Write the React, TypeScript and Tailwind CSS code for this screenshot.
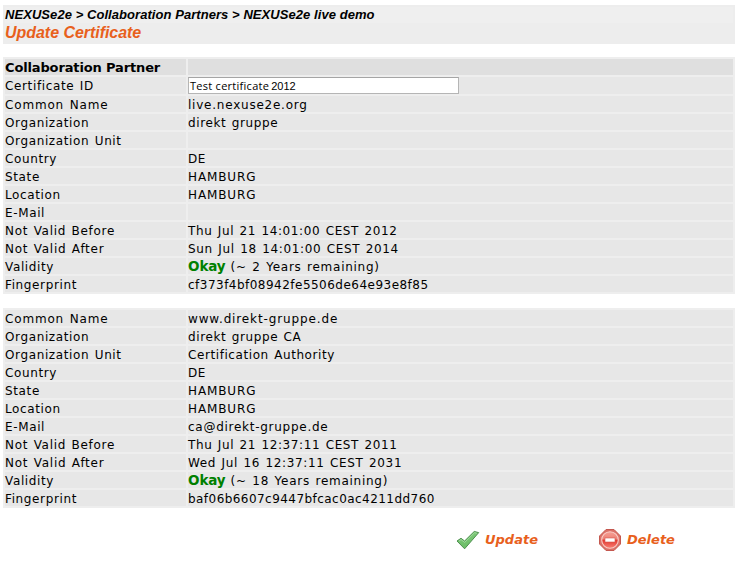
import type { ReactNode } from "react";

type RowData = { label: string; value?: ReactNode; track?: string };

function Okay({ rest }: { rest: string }) {
  return (
    <div className="leading-[18px]">
      <b className="text-[13.5px] leading-none tracking-[-0.1px] text-[#008000] [word-spacing:0px]">Okay</b>
      <span className="ml-[-0.5px]"> {rest}</span>
    </div>
  );
}

const partner: RowData[] = [
  { label: "Common Name", value: "live.nexuse2e.org", track: "tracking-[0.77px]" },
  { label: "Organization", value: "direkt gruppe" },
  { label: "Organization Unit" },
  { label: "Country", value: "DE" },
  { label: "State", value: "HAMBURG", track: "tracking-[0.87px]" },
  { label: "Location", value: "HAMBURG", track: "tracking-[0.87px]" },
  { label: "E-Mail" },
  { label: "Not Valid Before", value: "Thu Jul 21 14:01:00 CEST 2012" },
  { label: "Not Valid After", value: "Sun Jul 18 14:01:00 CEST 2014", track: "tracking-[0.65px]" },
  { label: "Validity", value: <Okay rest="(~ 2 Years remaining)" />, track: "tracking-[0.73px]" },
  { label: "Fingerprint", value: "cf373f4bf08942fe5506de64e93e8f85", track: "tracking-[0.48px]" },
];

const issuer: RowData[] = [
  { label: "Common Name", value: "www.direkt-gruppe.de", track: "tracking-[0.87px]" },
  { label: "Organization", value: "direkt gruppe CA" },
  { label: "Organization Unit", value: "Certification Authority", track: "tracking-[0.58px]" },
  { label: "Country", value: "DE" },
  { label: "State", value: "HAMBURG", track: "tracking-[0.87px]" },
  { label: "Location", value: "HAMBURG", track: "tracking-[0.87px]" },
  { label: "E-Mail", value: "ca@direkt-gruppe.de", track: "tracking-[0.73px]" },
  { label: "Not Valid Before", value: "Thu Jul 21 12:37:11 CEST 2011" },
  { label: "Not Valid After", value: "Wed Jul 16 12:37:11 CEST 2031", track: "tracking-[0.65px]" },
  { label: "Validity", value: <Okay rest="(~ 18 Years remaining)" />, track: "tracking-[0.73px]" },
  { label: "Fingerprint", value: "baf06b6607c9447bfcac0ac4211dd760", track: "tracking-[0.45px]" },
];

const labelTracks: Record<string, string> = {
  "Common Name": "tracking-[0.83px]",
  "Not Valid Before": "tracking-[0.7px]",
  "Not Valid After": "tracking-[0.73px]",
};

function Row({ label, value, track = "tracking-[0.61px]" }: RowData) {
  const labelTrack = labelTracks[label] ?? "tracking-[0.63px]";
  return (
    <div className="grid h-4 grid-cols-[181px_1fr] gap-0.5 leading-[18px]">
      <div className={`h-4 bg-[#e7e7e7] ${labelTrack}`}>{label}</div>
      <div className={`h-4 bg-[#e7e7e7] ${track}`}>{value}</div>
    </div>
  );
}

function CheckIcon() {
  return (
    <svg width="24" height="20" viewBox="0 0 24 20">
      <defs>
        <linearGradient id="check" x1="0" y1="0" x2="0" y2="1">
          <stop offset="0" stopColor="#7cc878" />
          <stop offset="1" stopColor="#6cbd67" />
        </linearGradient>
      </defs>
      <path
        d="M1 11 L5 8.3 L8.6 11 L18.2 1.5 L22.7 2.6 L8.6 18.8 Z"
        fill="url(#check)"
        stroke="#4c8f4d"
        strokeWidth="1"
        strokeLinejoin="round"
      />
      <path d="M3 11.1 L5 9.6 L8.7 12.4 L18.5 2.7 L20.7 3.2" fill="none" stroke="#a5dba0" strokeWidth="0.9" />
    </svg>
  );
}

function DeleteIcon() {
  return (
    <svg width="22" height="22" viewBox="0 0 22 22">
      <defs>
        <linearGradient id="stop" x1="0" y1="0" x2="0" y2="1">
          <stop offset="0" stopColor="#f5a095" />
          <stop offset="0.45" stopColor="#ee8075" />
          <stop offset="0.5" stopColor="#e2382f" />
          <stop offset="1" stopColor="#f98075" />
        </linearGradient>
      </defs>
      <path
        d="M7 .5 H15 L21.5 7 V15 L15 21.5 H7 L.5 15 V7 Z"
        fill="#dc7067"
        stroke="#c4584f"
        strokeWidth="1"
      />
      <circle cx="11" cy="11" r="8.3" fill="url(#stop)" stroke="#f9cdc7" strokeWidth="1.1" />
      <rect x="6" y="9" width="10" height="4" fill="#fff" stroke="#d4574e" strokeWidth="0.6" />
    </svg>
  );
}

export default function App() {
  return (
    <div className="h-[564px] w-[739px] bg-white pt-[5px] pl-[3px] font-['DejaVu_Sans',sans-serif] text-[12px] tracking-[0.63px] whitespace-pre text-black [word-spacing:1px]">
      <header className="h-[39px] w-[732px] bg-[#ededed] px-0.5 pt-0.5 font-['Liberation_Sans',Arial,sans-serif] font-bold italic [word-spacing:0px]">
        <div className="h-4 bg-[#efefef] text-[13px] leading-4 tracking-[0.06px]">
          NEXUSe2e &gt; Collaboration Partners &gt; NEXUSe2e live demo
        </div>
        <h1 className="text-[16px] leading-[19px] tracking-[-0.04px] text-[#e8601c]">Update Certificate</h1>
      </header>

      <section className="mt-[13px] flex w-[732px] flex-col gap-0.5 bg-[#eeeeee] p-0.5">
        <div className="grid h-4 grid-cols-[181px_1fr] gap-0.5 text-[13px] leading-[18px] font-bold tracking-[-0.14px] [word-spacing:0px]">
          <div className="h-4 bg-[#dfdfdf]">Collaboration Partner</div>
          <div className="h-4 bg-[#dfdfdf]" />
        </div>
        <div className="grid h-[17px] grid-cols-[181px_1fr] gap-0.5 leading-[19px]">
          <div className="h-[17px] bg-[#e7e7e7]">Certificate ID</div>
          <div className="h-[17px] bg-[#e7e7e7]">
            <div className="flex h-[17px] w-[271px] items-center border border-[#b5b5b5] border-t-[#a5a5a5] bg-white pl-px font-['Open_Sans',sans-serif] text-[11px] leading-[14px] tracking-[0.27px] [word-spacing:0px]">
              <span>Test certificate</span>
              <span className="ml-[2px] pt-px font-['Liberation_Sans',sans-serif] tracking-[0px]">2012</span>
            </div>
          </div>
        </div>
        {partner.map((r) => (
          <Row key={r.label} {...r} />
        ))}
      </section>

      <section className="mt-[14px] flex w-[732px] flex-col gap-0.5 bg-[#eeeeee] p-0.5">
        {issuer.map((r) => (
          <Row key={r.label} {...r} />
        ))}
      </section>

      <footer className="mt-5 flex h-[24px] items-center pl-[453px] text-[13px] font-bold tracking-[0px] text-[#e8601c] italic">
        <div className="flex w-[143px] items-center gap-[5px]">
          <CheckIcon />
          <span>Update</span>
        </div>
        <div className="flex items-center gap-1.5">
          <DeleteIcon />
          <span>Delete</span>
        </div>
      </footer>
    </div>
  );
}
